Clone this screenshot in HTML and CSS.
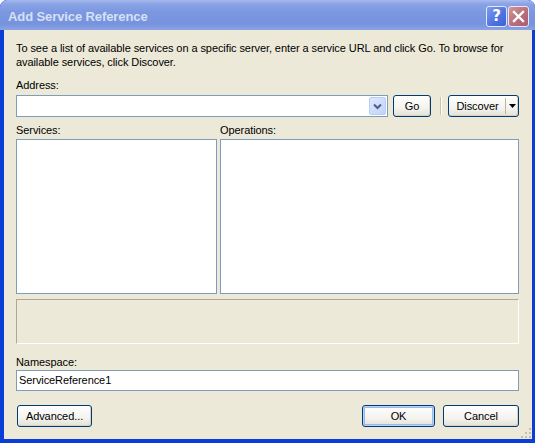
FILE: index.html
```html
<!DOCTYPE html>
<html>
<head>
<meta charset="utf-8">
<link rel="stylesheet" href="styles.css">
</head>
<body>
<div class="window">
  <div class="titlebar">
    <span class="title">Add Service Reference</span>
    <div class="tbtns">
      <span class="tb help">?</span>
      <span class="tb close"><svg width="13" height="13" viewBox="0 0 13 13"><path d="M2 2 L11 11 M11 2 L2 11" stroke="#fff" stroke-width="2.4" stroke-linecap="square"/></svg></span>
    </div>
  </div>
  <div class="body">
    <p class="intro">To see a list of available services on a specific server, enter a service URL and click Go. To browse for<br>available services, click Discover.</p>
    <div class="lbl addr-lbl">Address:</div>
    <div class="addr-row">
      <div class="combo">
        <div class="combo-btn"><svg width="9" height="7" viewBox="0 0 9 7"><path d="M1 1.5 L4.5 5 L8 1.5" fill="none" stroke="#4d6185" stroke-width="2"/></svg></div>
      </div>
      <div class="btn go">Go</div>
      <div class="vsep"></div>
      <div class="btn split"><span class="split-main">Discover</span><span class="split-arrow"><svg width="7" height="4" viewBox="0 0 7 4"><path d="M0 0 H7 L3.5 4 Z" fill="#000"/></svg></span></div>
    </div>
    <div class="lists">
      <div class="col">
        <div class="lbl">Services:</div>
        <div class="listbox"></div>
      </div>
      <div class="col">
        <div class="lbl">Operations:</div>
        <div class="listbox"></div>
      </div>
    </div>
    <div class="desc"></div>
    <div class="lbl ns-lbl">Namespace:</div>
    <div class="textbox">ServiceReference1</div>
    <div class="footer">
      <div class="btn adv">Advanced...</div>
      <div class="spacer"></div>
      <div class="btn ok">OK</div>
      <div class="btn cancel">Cancel</div>
    </div>
    <svg class="grip" width="10" height="10" viewBox="0 0 10 10">
      <g fill="#c3bfae"><rect x="8" y="0" width="2" height="2"/><rect x="4" y="4" width="2" height="2"/><rect x="8" y="4" width="2" height="2"/><rect x="0" y="8" width="2" height="2"/><rect x="4" y="8" width="2" height="2"/><rect x="8" y="8" width="2" height="2"/></g>
    </svg>
  </div>
</div>
</body>
</html>
```

FILE: styles.css
```css
html, body {
  margin: 0;
  padding: 0;
  background: #ffffff;
}
.window {
  width: 535px;
  height: 443px;
  display: flex;
  flex-direction: column;
  font-family: "Liberation Sans", Arial, sans-serif;
  font-size: 11px;
  letter-spacing: -0.08px;
  color: #000;
  background: #0a3ed6;
  border-radius: 7px 7px 0 0;
  overflow: hidden;
}
.titlebar {
  height: 30px;
  flex: none;
  display: flex;
  align-items: center;
  padding: 0 6px 0 8px;
  background: linear-gradient(#a8bbee 0px, #8aa3e6 4px, #7b97e0 12px, #7793de 24px, #8aa3e4 30px);
  border-radius: 7px 7px 0 0;
}
.title {
  flex: 1;
  font-family: "Liberation Sans", Arial, sans-serif;
  font-weight: bold;
  font-size: 13px;
  color: #d6e0f6;
  letter-spacing: -0.1px;
  padding-top: 2px;
}
.tbtns {
  display: flex;
  gap: 1px;
  padding-top: 2px;
}
.tb {
  width: 19px;
  height: 19px;
  border: 1px solid #e3e9f9;
  border-radius: 3px;
  display: flex;
  align-items: center;
  justify-content: center;
  color: #fff;
  font-family: "DejaVu Sans", sans-serif;
  font-weight: bold;
  font-size: 15px;
}
.help {
  background: linear-gradient(135deg, #7d9cf0, #4d71e0 60%, #3f63d6);
}
.close {
  background: linear-gradient(135deg, #d59595, #b86a78 60%, #a95e70);
}
.body {
  flex: 1;
  position: relative;
  margin: 0 3px 4px 4px;
  background: #ece9d8;
  padding: 11px 13px 0 12px;
  display: flex;
  flex-direction: column;
}
.intro {
  margin: 0;
  line-height: 14px;
}
.lbl {
  line-height: 14px;
}
.addr-lbl {
  margin-top: 9px;
}
.addr-row {
  display: flex;
  align-items: center;
  margin-top: 3px;
  height: 22px;
}
.combo {
  flex: 1;
  height: 20px;
  border: 1px solid #7f9db9;
  background: #fff;
  position: relative;
}
.combo-btn {
  position: absolute;
  right: 1px;
  top: 1px;
  width: 15px;
  height: 16px;
  border: 1px solid #b9cdf6;
  border-radius: 2px;
  background: linear-gradient(135deg, #dfe8fd, #c1d3fb);
  display: flex;
  align-items: center;
  justify-content: center;
}
.btn {
  box-sizing: border-box;
  height: 22px;
  border: 1px solid #003c74;
  border-radius: 3px;
  background: linear-gradient(#ffffff, #f4f3ee 60%, #e3e1d6);
  box-shadow: inset -1px -1px 0 #d6d0c5;
  display: flex;
  align-items: center;
  justify-content: center;
  line-height: 14px;
}
.go {
  width: 38px;
  margin-left: 5px;
}
.vsep {
  width: 1px;
  height: 18px;
  background: #c5c2b2;
  border-right: 1px solid #fff;
  margin: 0 6px 0 9px;
}
.split {
  width: 71px;
  justify-content: flex-start;
  padding: 0;
}
.split-main {
  flex: 1;
  text-align: center;
  padding-left: 1px;
}
.split-arrow {
  width: 12px;
  height: 16px;
  border-left: 1px solid #b8b4a6;
  display: flex;
  align-items: center;
  justify-content: center;
}
.lists {
  display: grid;
  grid-template-columns: 201px 1fr;
  column-gap: 3px;
  margin-top: 6px;
}
.col .lbl {
  margin-bottom: 2px;
}
.listbox {
  height: 153px;
  border: 1px solid #7f9db9;
  background: #fff;
}
.desc {
  margin-top: 5px;
  height: 43px;
  border: 1px solid;
  border-color: #aca899 #fff #fff #aca899;
}
.ns-lbl {
  margin-top: 11px;
}
.textbox {
  margin-top: 1px;
  height: 19px;
  border: 1px solid #7f9db9;
  background: #fff;
  line-height: 19px;
  padding-left: 2px;
}
.footer {
  display: flex;
  margin-top: 14px;
  height: 22px;
}
.adv {
  width: 75px;
  margin-left: 1px;
}
.spacer {
  flex: 1;
}
.ok {
  width: 73px;
  box-shadow: inset 0 0 0 1px #bcd1f6, inset 0 0 0 2px #99b8f2;
}
.cancel {
  width: 76px;
  margin-left: 8px;
}
.grip {
  position: absolute;
  right: 1px;
  bottom: 1px;
}
```
